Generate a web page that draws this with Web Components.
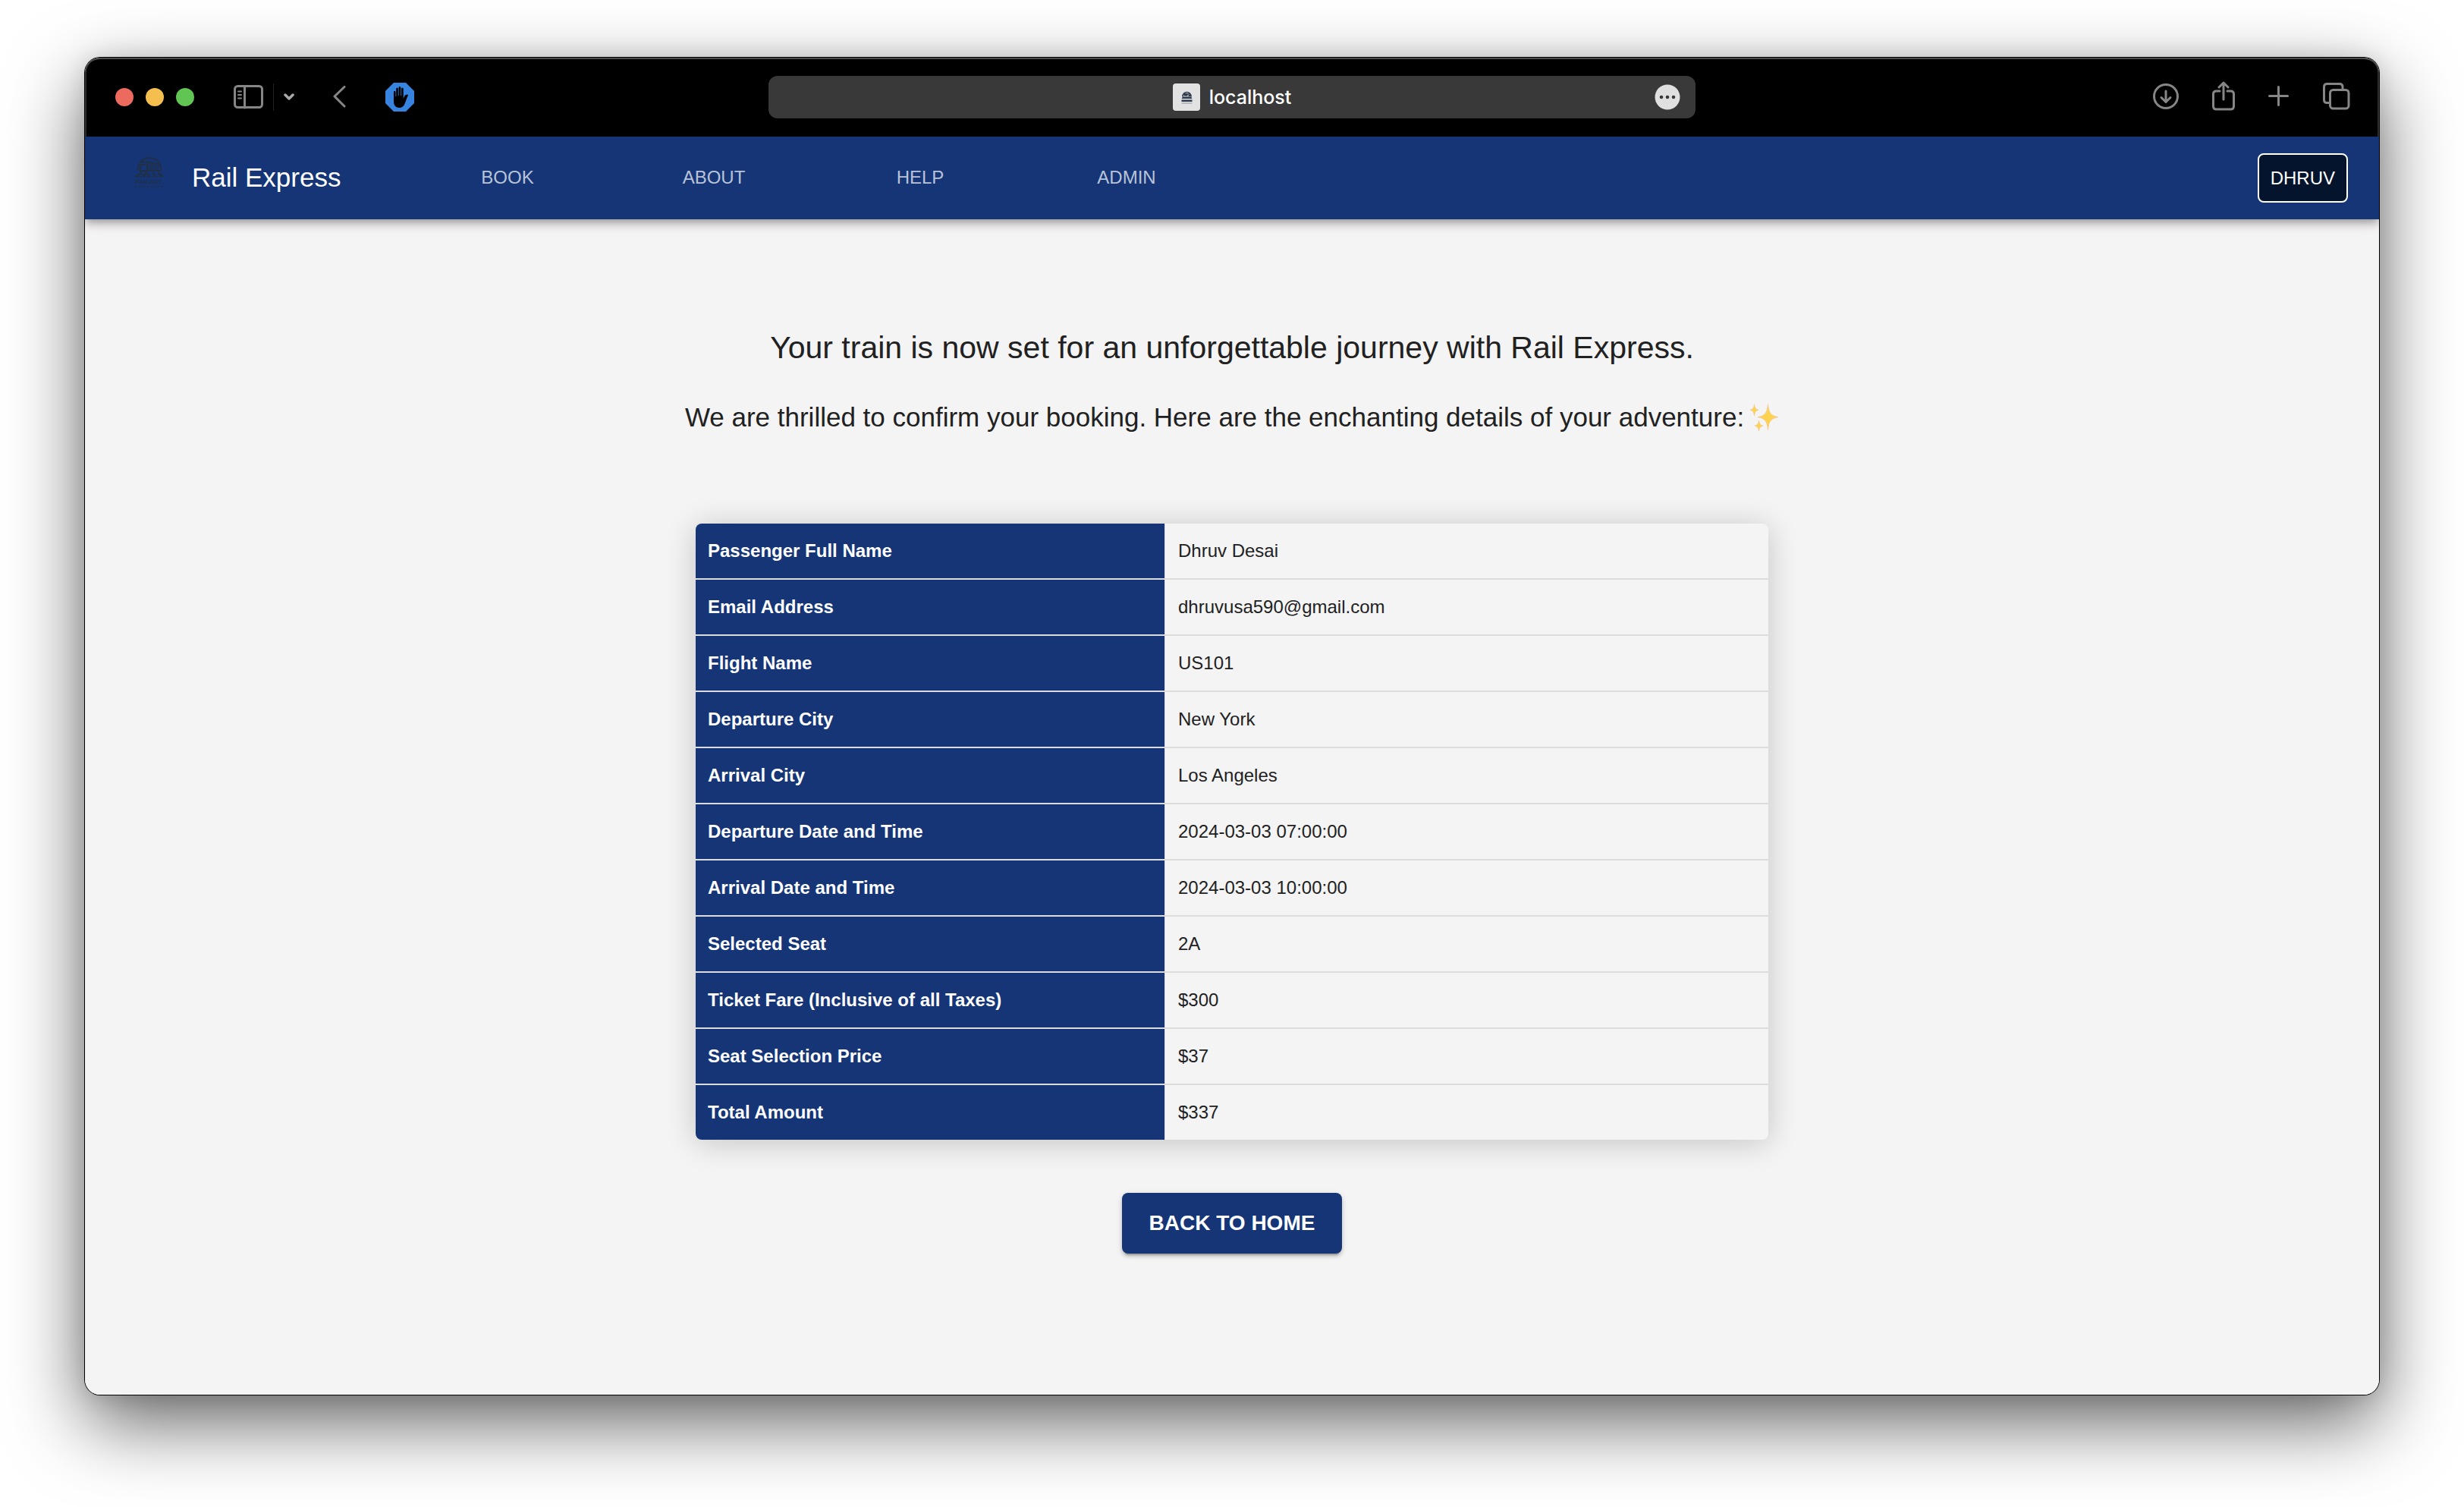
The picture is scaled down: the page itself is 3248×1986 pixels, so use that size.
<!DOCTYPE html>
<html lang="en">
<head>
<meta charset="utf-8">
<title>Rail Express</title>
<style>
  html { height: 100%; }
  body {
    margin: 0;
    min-height: 100%;
    box-sizing: border-box;
    padding: 76px 112px 148px;
    display: flex;
    background: #fff;
    overflow: hidden;
    font-family: "Liberation Sans", Arial, Helvetica, sans-serif;
    color: #212122;
  }
</style>
</head>
<body>
<browser-window>
  <browser-toolbar slot="toolbar">localhost</browser-toolbar>
  <rail-nav user="DHRUV">Rail Express</rail-nav>
  <booking-page>
    <span slot="title">Your train is now set for an unforgettable journey with Rail Express.</span>
    <span slot="lead">We are thrilled to confirm your booking. Here are the enchanting details of your adventure:</span>
    <booking-details></booking-details>
    <home-button slot="action">BACK TO HOME</home-button>
  </booking-page>
</browser-window>

<script>
const define = (name, html, setup) => {
  const template = document.createElement('template');
  template.innerHTML = html;
  customElements.define(name, class extends HTMLElement {
    constructor() {
      super();
      const root = this.attachShadow({ mode: 'open' });
      root.append(template.content.cloneNode(true));
      if (setup) setup.call(this, root);
    }
  });
};

define('browser-window', `
  <style>
    :host { flex: 1; display: flex; min-width: 0; border-radius: 20px;
      box-shadow: 0 0 0 1px #000, 0 36px 100px rgba(0,0,0,.62), 0 0 30px rgba(0,0,0,.12); }
    .frame { flex: 1; min-width: 0; display: flex; flex-direction: column; border-radius: 20px; overflow: hidden; background: #f4f4f4; }
  </style>
  <div class="frame"><slot name="toolbar"></slot><slot></slot></div>`);

define('browser-toolbar', `
  <style>
    :host { display: grid; grid-template-columns: 1fr 1222px 1fr; align-items: center; height: 104px; box-sizing: border-box;
      background: #000; border-radius: 20px 20px 0 0; box-shadow: inset 0 2px 0 #4c4c4c, inset 2px 0 0 #2e2e2e, inset -2px 0 0 #2e2e2e; }
    button { appearance: none; border: 0; padding: 0; margin: 0; background: none; display: block; line-height: 0; }
    svg { display: block; fill: none; stroke: #868686; stroke-width: 3; stroke-linecap: round; stroke-linejoin: round; }
    .left, .right, .lights { display: flex; align-items: center; }
    .left { padding-left: 40px; }
    .lights { gap: 16px; }
    .lights button { width: 24px; height: 24px; border-radius: 50%; }
    .side { margin-left: 52px; }
    .rule { width: 1px; height: 36px; margin: 0 13px 0 12px; background: #222; }
    .back { margin-left: 50px; }
    .stop { margin-left: 50px; }
    .bar { height: 56px; border-radius: 12px; background: #393939; display: grid; grid-template-columns: 1fr auto 1fr; align-items: center; }
    .site { grid-column: 2; display: flex; align-items: center; gap: 12px; color: #fff; font: 500 25px/32px Inter, "Liberation Sans", sans-serif; }
    .more { justify-self: end; margin-right: 20px; }
    .right { justify-content: flex-end; gap: 44px; padding: 0 38px 2px 0; }
  </style>
  <div class="left">
    <div class="lights">
      <button aria-label="Close" style="background:#ed6a5e"></button>
      <button aria-label="Minimise" style="background:#f5bf4f"></button>
      <button aria-label="Zoom" style="background:#61c554"></button>
    </div>
    <button class="side" aria-label="Sidebar"><svg width="40" height="32" viewBox="0 0 40 32"><rect x="1.500" y="1.500" width="36" height="28" rx="4"/><path d="M14.500 2v28"/><path stroke-width="2" d="M6 8.500h4M6 13h4M6 17.500h4"/></svg></button>
    <span class="rule"></span>
    <button aria-label="Tab groups"><svg width="14" height="10" viewBox="0 0 14 10"><path stroke="#aaa" stroke-width="3.500" d="M2 2l5 5 5-5"/></svg></button>
    <button class="back" aria-label="Back"><svg width="20" height="30" viewBox="0 0 20 30"><path d="M16 1.500L3 14l13 13"/></svg></button>
    <button class="stop" aria-label="Content blocker"><svg width="38" height="38" viewBox="0 0 38 38"><path stroke="none" fill="#3783e0" d="M11 0h16l11 11v16L27 38H11L0 27V11z"/><path stroke="none" fill="#000" d="M11 12c0-1.500 2.500-1.500 2.500 0v6h.7V8c0-1.600 2.600-1.600 2.600 0v9h.8V6.500c0-1.600 2.700-1.600 2.700 0V17h.8V8c0-1.600 2.600-1.600 2.600 0v13l1.500-3.500c.8-1.800 4-2.200 4.800-1.300-1 2-3 8-4.500 11.500C24 31.500 21.500 33 18.500 33 14 33 11 30 11 25z"/></svg></button>
  </div>
  <div class="bar">
    <div class="site">
      <svg width="36" height="36" viewBox="0 0 36 36"><rect stroke="none" width="36" height="36" rx="4" fill="#e2e2e2"/><path stroke="#2c3a4b" stroke-width="1.500" d="M13 17a5.500 5.500 0 0 1 11 0M14 14h9"/><path stroke="none" fill="#2c3a4b" d="M14.500 13.500h5v3h-5zM20.500 15h3v2h-3zM13 17.500h11l1.500 2.500h-14zM11.500 21.500h14v2.500h-14z"/><path stroke="#8a929c" stroke-width="1" d="M12 26h13"/></svg>
      <span><slot></slot></span>
    </div>
    <button class="more" aria-label="Page menu"><svg width="34" height="34" viewBox="0 0 34 34"><circle stroke="none" fill="#e0e0e0" cx="17" cy="17" r="16.500"/><g stroke="none" fill="#393939"><circle cx="9" cy="17" r="2.300"/><circle cx="17" cy="17" r="2.300"/><circle cx="25" cy="17" r="2.300"/></g></svg></button>
  </div>
  <div class="right">
    <button aria-label="Downloads"><svg width="34" height="34" viewBox="0 0 34 34"><circle cx="17" cy="17" r="15.500"/><path d="M17 10v14M11 18.500l6 6 6-6"/></svg></button>
    <button aria-label="Share"><svg width="30" height="40" viewBox="0 0 30 40"><path d="M10 13H5.500q-4 0-4 4v16q0 4 4 4h19q4 0 4-4V17q0-4-4-4H20M15 24V2.500M9 8l6-6 6 6"/></svg></button>
    <button aria-label="New tab"><svg width="28" height="28" viewBox="0 0 28 28"><path d="M1.500 13.500h24M13.500 1.500v24"/></svg></button>
    <button aria-label="Tab overview"><svg width="36" height="36" viewBox="0 0 36 36"><path d="M8 26.500H5.500q-4 0-4-4V5.500q0-4 4-4H22q4 0 4 4V8"/><rect x="9.500" y="9.500" width="24.500" height="24.500" rx="4"/></svg></button>
  </div>`);

define('rail-nav', `
  <style>
    :host { display: flex; align-items: center; height: 109px; box-sizing: border-box; padding: 0 41px 0 65px; background: #153577;
      box-shadow: 0 4px 8px -2px rgba(0,0,0,.2), 0 8px 10px rgba(0,0,0,.14), 0 2px 20px rgba(0,0,0,.12); position: relative; }
    .logo { display: block; align-self: flex-start; margin-top: 26px; }
    .logo text { font: bold 8px "Liberation Sans", sans-serif; fill: #1f3048; }
    .name { margin-left: 36px; width: 280px; color: #fff; font-size: 35px; line-height: 40px; text-decoration: none; }
    nav { display: flex; }
    nav a { width: 272px; text-align: center; color: #b9c3d8; font-size: 24px; line-height: 32px; text-decoration: none; }
    .name, nav { padding-bottom: 2px; }
    button { appearance: none; margin: 0 0 0 auto; padding: 14px 15px; background: #04142d; border: 2px solid #fff; border-radius: 8px; color: #fff;
      font: 24px/33px "Liberation Sans", Arial, sans-serif; }
  </style>
  <svg class="logo" width="40" height="42" viewBox="0 0 40 42" aria-label="Railway booking portal" role="img">
    <g fill="none" stroke="#1f3048">
      <path stroke-width="2" d="M5 19v-3a15 14 0 0 1 30 0v3"/>
      <path stroke-width="2" d="M8 11h9v8H8zM9 8l8-1 17 4M18 8v11M19 19h16"/>
      <path stroke-width="1.500" d="M20 11l13 2M21 13v4h4v-3zM28 14v4M31 15v3M7 20h10"/>
      <path stroke-width="3" d="M2 26l8-4M11 26l6-4M20 26l-3-4M28 26l-4-4M37 26l-6-4"/>
      <path stroke-width="1" d="M1 27h38"/>
      <path stroke-width="2" stroke-dasharray="2 1 1 1" opacity=".7" d="M1 40h38"/>
    </g>
    <text x="1" y="36">RAILWAY</text>
  </svg>
  <a class="name" href="#"><slot></slot></a>
  <nav><a href="#">BOOK</a><a href="#">ABOUT</a><a href="#">HELP</a><a href="#">ADMIN</a></nav>
  <button type="button"></button>`, function (root) {
    root.querySelector('button').textContent = this.getAttribute('user') || 'DHRUV';
  });

define('booking-page', `
  <style>
    :host { flex: 1; display: flex; flex-direction: column; align-items: center; padding: 137px 40px 0; }
    h1, p { margin: 0; font-weight: 400; text-align: center; }
    h1 { font-size: 41px; line-height: 64px; }
    p { display: flex; align-items: center; gap: 8px; margin-top: 32px; font-size: 35px; line-height: 56px; }
    .table { width: 1414px; max-width: 100%; margin-top: 112px; }
    .action { margin-top: 70px; }
  </style>
  <h1><slot name="title"></slot></h1>
  <p><slot name="lead"></slot>
    <svg width="38" height="36" viewBox="0 0 38 52" preserveAspectRatio="none" role="img" aria-label="sparkles"><g fill="#fcd34f" stroke="#f6c98c" stroke-width="1">
      <path d="M23.500 1C24.500 17 27 23 37 25.500 27 28 24.500 34 23.500 50 22.500 34 20 28 10 25.500 20 23 22.500 17 23.500 1z"/>
      <path d="M5.500 1C6 8 7.500 11 11 12 7.500 13 6 16 5.500 23 5 16 3.500 13 0 12 3.500 11 5 8 5.500 1z"/>
      <path d="M11.500 32C12 38 13.500 41 17 42 13.500 43 12 46 11.500 52 11 46 9.500 43 6 42 9.500 41 11 38 11.500 32z"/></g></svg>
  </p>
  <div class="table"><slot></slot></div>
  <div class="action"><slot name="action"></slot></div>`);

define('booking-details', `
  <style>
    :host { display: block; border-radius: 8px; overflow: hidden; box-shadow: 0 4px 40px rgba(0,0,0,.2); background: #f4f4f4; }
    table { width: 100%; border-collapse: separate; border-spacing: 0; table-layout: fixed; font-size: 24px; line-height: 40px; text-align: left; }
    th, td { height: 74px; box-sizing: border-box; padding: 0 16px; border-bottom: 2px solid #dcdcdc; }
    td { padding-left: 17px; }
    tr:last-child > * { height: 72px; border-bottom: 0; }
    th { width: 619px; background: #153577; color: #fff; font-weight: 700; border-right: 1px solid #dcdcdc; }
  </style>
  <table><tbody></tbody></table>`, function (root) {
    const rows = [
      ['Passenger Full Name', 'Dhruv Desai'],
      ['Email Address', 'dhruvusa590@gmail.com'],
      ['Flight Name', 'US101'],
      ['Departure City', 'New York'],
      ['Arrival City', 'Los Angeles'],
      ['Departure Date and Time', '2024-03-03 07:00:00'],
      ['Arrival Date and Time', '2024-03-03 10:00:00'],
      ['Selected Seat', '2A'],
      ['Ticket Fare (Inclusive of all Taxes)', '$300'],
      ['Seat Selection Price', '$37'],
      ['Total Amount', '$337'],
    ];
    const body = root.querySelector('tbody');
    for (const [label, value] of rows) {
      const tr = body.insertRow();
      const th = document.createElement('th');
      th.scope = 'row';
      th.textContent = label;
      tr.append(th);
      tr.insertCell().textContent = value;
    }
  });

define('home-button', `
  <style>
    :host { display: block; }
    button { appearance: none; margin: 0; border: 0; border-radius: 8px; background: #153577; color: #fff; padding: 16px 36px; text-align: center;
      font: 700 28px/48px "Liberation Sans", Arial, sans-serif;
      box-shadow: 0 6px 2px -4px rgba(0,0,0,.2), 0 4px 4px rgba(0,0,0,.14), 0 2px 10px rgba(0,0,0,.12); }
  </style>
  <button type="button"><slot></slot></button>`);
</script>
</body>
</html>
